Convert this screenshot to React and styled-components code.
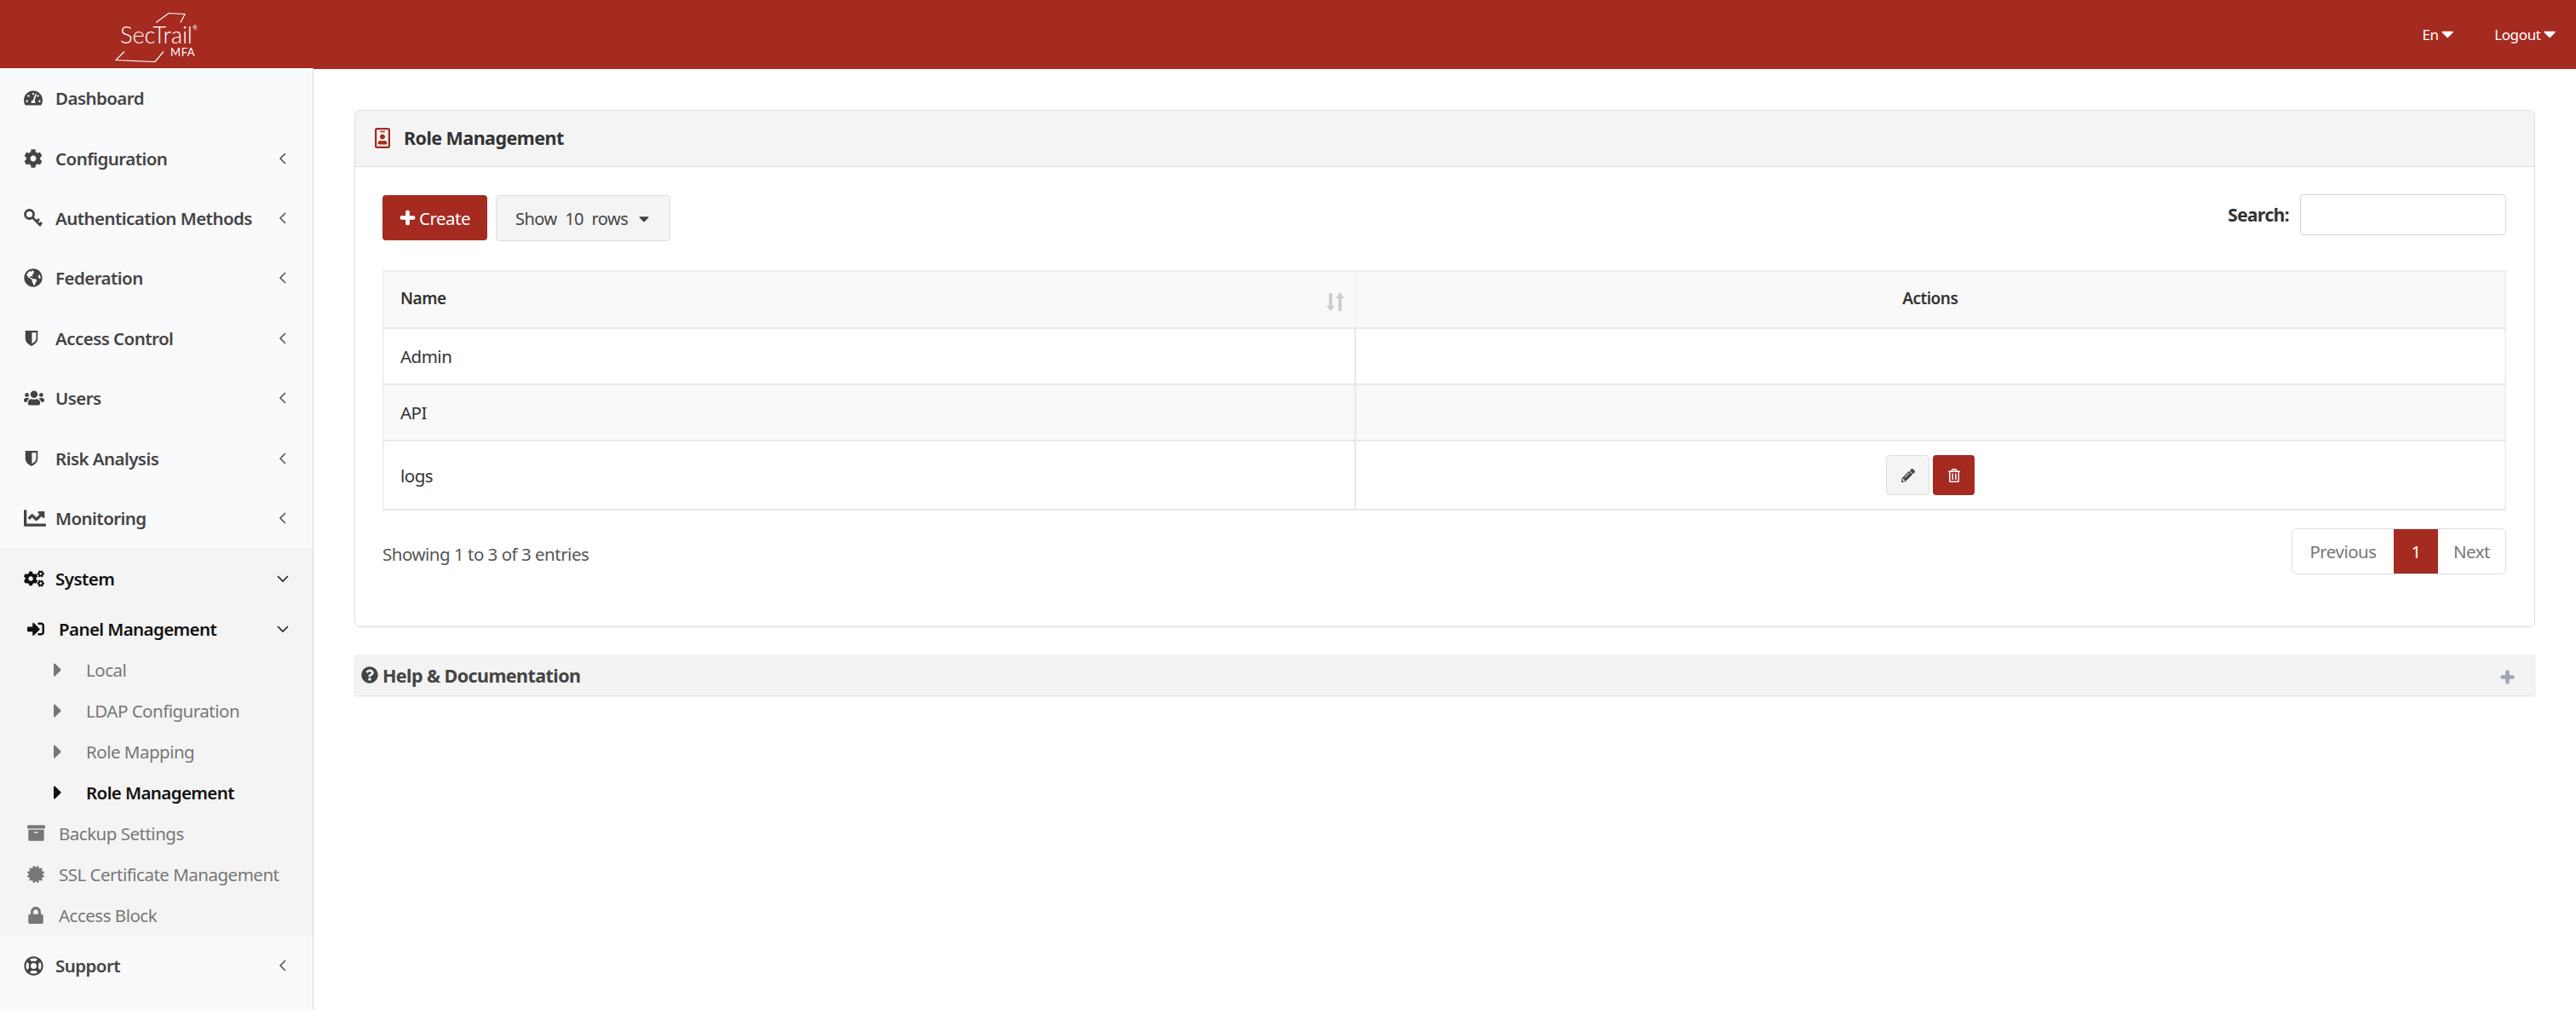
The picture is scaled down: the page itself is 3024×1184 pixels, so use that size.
import React from 'react'
import styled, { createGlobalStyle } from 'styled-components'
import {
  FaTachometerAlt, FaCog, FaGlobeAmericas, FaUsers, FaChartLine, FaCogs, FaSignInAlt,
  FaCaretRight, FaArchive, FaCertificate, FaLock, FaRegLifeRing, FaPlus, FaPencilAlt,
  FaRegTrashAlt, FaQuestionCircle, FaRegIdBadge, FaCaretDown
} from 'react-icons/fa'

const RED = '#a52a20'
const FONT = '"Noto Sans", "Open Sans", sans-serif'

const GlobalStyle = createGlobalStyle`
  html, body { margin: 0; padding: 0; background: #fff; }
  * { box-sizing: border-box; }
  body { font-family: ${FONT}; color: #333; }
`

const Page = styled('div')`
  height: 1184px;
  overflow: hidden;
  display: flex;
  flex-direction: column;
`

const TopBar = styled('header')`
  height: 81px;
  flex: none;
  background: ${RED};
  display: flex;
  align-items: center;
  justify-content: space-between;
  padding: 0 24px 0 135px;
`

const Logo = styled('div')`
  position: relative;
  width: 100px;
  height: 62px;
  margin-top: 3px;
  color: #fff;
`

const LogoFrame = styled('svg')`
  position: absolute;
  left: 0;
  top: 0;
`

const LogoName = styled('span')`
  position: absolute;
  left: 6px;
  top: 13px;
  font: 300 27.5px/34px "Lato", sans-serif;
  letter-spacing: -0.2px;
`

const LogoReg = styled('span')`
  position: absolute;
  left: 91px;
  top: 17px;
  font: 400 7px/8px "Lato", sans-serif;
`

const LogoMfa = styled('span')`
  position: absolute;
  left: 65px;
  top: 42px;
  font: 400 13px/16px "Lato", sans-serif;
  letter-spacing: 0.6px;
`

const TopLinks = styled('nav')`
  display: flex;
  align-items: center;
  gap: 48px;
`

const TopLink = styled('a')`
  display: flex;
  align-items: center;
  gap: 3px;
  color: #fff;
  font-size: 17px;
  letter-spacing: -0.35px;

  svg { width: 14.4px; height: 23px; margin-top: -2px; }
`

const Body = styled('div')`
  flex: 1;
  display: flex;
  min-height: 0;
`

const Sidebar = styled('aside')`
  width: 368px;
  flex: none;
  margin-top: -1px;
  background: #f9fafc;
  border-right: 1px solid #d2d6de;
  position: relative;
`

const MenuRow = styled('div')`
  height: 70.4px;
  display: flex;
  align-items: center;
  padding: 0 28px 0 28px;
  color: #444;
  font-size: 20.5px;
  font-weight: 600;
  letter-spacing: -0.55px;

  ${(props) => props.$open && 'color: #111;'}
`

const MenuIcon = styled('span')`
  width: 37px;
  flex: none;
  display: flex;
  align-items: center;

  svg { width: ${(props) => props.$size || 22}px; height: ${(props) => props.$size || 22}px; }
`

const MenuLabel = styled('span')`
  flex: 1;
  white-space: nowrap;
`

const Chevron = styled('svg')`
  width: 14px;
  height: 14px;
  flex: none;
  fill: none;
  stroke: ${(props) => (props.$open ? '#222' : '#555')};
  stroke-width: 1.6;
`

const OpenGroup = styled('div')`
  background: #f4f4f4;
`

const SystemRow = styled(MenuRow)`
  height: 70.8px;
`

const SubRow = styled('div')`
  height: 48px;
  display: flex;
  align-items: center;
  padding: 0 28px 0 32px;
  color: #777;
  font-size: 20.5px;
  letter-spacing: -0.5px;
  white-space: nowrap;

  ${(props) => props.$active && 'color: #111; font-weight: 600; letter-spacing: -0.6px;'}
`

const SubIcon = styled('span')`
  width: 37px;
  flex: none;
  display: flex;

  svg { width: ${(props) => props.$size || 20}px; height: ${(props) => props.$size || 20}px; }
`

const LeafRow = styled(SubRow)`
  padding-left: 63px;
`

const LeafIcon = styled('span')`
  width: 38px;
  flex: none;
  display: flex;

  svg { width: 9.75px; height: 26px; }
`

const Content = styled('main')`
  flex: 1;
  padding: 48px 48px 0 48px;
  min-width: 0;
`

const Card = styled('section')`
  height: 607px;
  border: 1px solid #ddd;
  border-radius: 6px;
  background: #fff;
  overflow: hidden;
`

const CardHead = styled('div')`
  height: 66px;
  background: #f4f4f4;
  border-bottom: 1px solid #ddd;
  display: flex;
  align-items: center;
  gap: 16px;
  padding: 0 0 2px 23px;
  color: #333;
  font-size: 21.5px;
  font-weight: 700;
  letter-spacing: -0.55px;

  svg { width: 18px; height: 24px; color: ${RED}; }
`

const CardBody = styled('div')`
  padding: 33px 33px 0 32px;
`

const Toolbar = styled('div')`
  display: flex;
  align-items: flex-start;
  height: 88px;
  gap: 10px;
`

const CreateButton = styled('button')`
  width: 123px;
  height: 53px;
  border: 0;
  border-radius: 4px;
  background: ${RED};
  color: #fff;
  font-family: ${FONT};
  font-size: 20.5px;
  letter-spacing: -0.5px;
  display: flex;
  align-items: center;
  justify-content: center;
  gap: 4px;

  svg { width: 19px; height: 19px; stroke: currentColor; stroke-width: 30; }
`

const ShowButton = styled('button')`
  width: 205px;
  height: 54px;
  border: 1px solid #ddd;
  border-radius: 4px;
  background: #f4f4f4;
  color: #444;
  font-family: ${FONT};
  font-size: 20px;
  letter-spacing: -0.5px;
  white-space: pre;
  display: flex;
  align-items: center;
  justify-content: space-between;
  padding: 0 24px 0 22px;

  svg { width: 12px; height: 19px; }
`

const SearchBox = styled('label')`
  margin-left: auto;
  display: flex;
  align-items: center;
  gap: 13px;
  height: 48px;
  margin-top: -1px;
  font-size: 21px;
  font-weight: 700;
  letter-spacing: -0.6px;
`

const SearchInput = styled('input')`
  width: 242px;
  height: 48px;
  border: 1px solid #d2d6de;
  border-radius: 4px;
  background: #fff;
`

const Table = styled('table')`
  width: 100%;
  border-collapse: collapse;
  table-layout: fixed;
  border: 2px solid #f0f0f0;
  font-size: 20.5px;
  letter-spacing: -0.5px;
`

const HeadCell = styled('th')`
  height: 67px;
  background: #f9f9f9;
  border-bottom: 2px solid #e8e8e8;
  border-right: ${(props) => (props.$center ? '0' : '1px solid #f0f0f0')};
  text-align: ${(props) => (props.$center ? 'center' : 'left')};
  padding: 0 19px 3px;
  font-weight: 600;
  font-size: 19px;
  position: relative;
`

const SortIcon = styled('svg')`
  position: absolute;
  right: 13px;
  top: 24px;
  color: #cfcfcf;
`

const Row = styled('tr')`
  background: ${(props) => (props.$striped ? '#f9f9f9' : '#fff')};
`

const Cell = styled('td')`
  height: ${(props) => props.$height}px;
  padding: 0 19px;
  border-bottom: 2px solid #e8e8e8;
  border-right: ${(props) => (props.$first ? '2px solid #e8e8e8' : '0')};
  color: #333;
`

const Actions = styled('div')`
  display: flex;
  justify-content: center;
  gap: 4px;
`

const EditButton = styled('button')`
  width: 51px;
  height: 47px;
  border: 1px solid #ddd;
  border-radius: 4px;
  background: #f4f4f4;
  color: #444;
  display: flex;
  align-items: center;
  justify-content: center;
  padding: 0;

  svg { width: 16px; height: 16px; }
`

const DeleteButton = styled(EditButton)`
  width: 49px;
  border: 0;
  background: ${RED};
  color: #fff;
`

const TableFooter = styled('div')`
  display: flex;
  justify-content: space-between;
  align-items: flex-start;
  margin-top: 21px;
`

const Info = styled('div')`
  margin-top: 16px;
  color: #555;
  font-size: 20.5px;
  letter-spacing: -0.5px;
`

const Pager = styled('div')`
  height: 54px;
  display: flex;
  border: 1px solid #ddd;
  border-radius: 6px;
  overflow: hidden;
  font-size: 20.5px;
  letter-spacing: -0.5px;
  color: #777;
`

const PagerItem = styled('a')`
  width: ${(props) => props.$width}px;
  margin: -1px 0;
  display: flex;
  align-items: center;
  justify-content: center;
  ${(props) => props.$active && `background: ${RED}; color: #fff;`}
`

const HelpBar = styled('div')`
  height: 48px;
  margin-top: 32px;
  background: #f3f3f3;
  border-radius: 3px;
  box-shadow: 0 1px 2px rgba(0, 0, 0, 0.15);
  display: flex;
  align-items: center;
  justify-content: space-between;
  padding: 0 9px 0 8px;
  color: #444;
  font-size: 21.5px;
  font-weight: 700;
  letter-spacing: -0.58px;
`

const HelpTitle = styled('span')`
  display: flex;
  align-items: center;
  gap: 5px;

  svg { width: 20px; height: 20px; }
`

const HelpPlus = styled('span')`
  display: flex;
  color: #9ea5b8;
  margin: 4px 15px 0 0;

  svg { width: 17px; height: 17px; stroke: currentColor; stroke-width: 40; }
`

const KeyIcon = () => (
  <svg viewBox="0 0 22 22" fill="none" stroke="currentColor" strokeWidth="2.8">
    <circle cx="6.5" cy="6.5" r="5" />
    <path d="M10.5 10.5l9.5 9.5M15 15l3-3M18.5 18.5l2.5-2.5" />
  </svg>
)

const ShieldIcon = () => (
  <svg viewBox="0 0 18 22" style={{ width: 18, height: 20 }}>
    <path fill="currentColor" fillRule="evenodd" d="M1 1h16v10c0 5-4 8-8 10-4-2-8-5-8-10zM9.5 3.5v14.5c3-1.7 5.500-3.900 5.500-7v-7.500z" />
  </svg>
)

const ChevronLeft = () => (
  <Chevron viewBox="0 0 14 14"><path d="M10 1L4 7l6 6" /></Chevron>
)

const ChevronDown = () => (
  <Chevron $open viewBox="0 0 14 14"><path d="M1 4l6 6 6-6" /></Chevron>
)

const menuTop = [
  { label: 'Dashboard', icon: <FaTachometerAlt />, plain: true },
  { label: 'Configuration', icon: <FaCog /> },
  { label: 'Authentication Methods', icon: <KeyIcon /> },
  { label: 'Federation', icon: <FaGlobeAmericas /> },
  { label: 'Access Control', icon: <ShieldIcon /> },
  { label: 'Users', icon: <FaUsers />, size: 24 },
  { label: 'Risk Analysis', icon: <ShieldIcon /> },
  { label: 'Monitoring', icon: <FaChartLine />, size: 26 }
]

const leaves = ['Local', 'LDAP Configuration', 'Role Mapping', 'Role Management']

const SideMenu = () => (
  <Sidebar>
    {menuTop.map((item) => (
      <MenuRow key={item.label}>
        <MenuIcon $size={item.size}>{item.icon}</MenuIcon>
        <MenuLabel>{item.label}</MenuLabel>
        {!item.plain && <ChevronLeft />}
      </MenuRow>
    ))}
    <OpenGroup>
      <SystemRow $open>
        <MenuIcon $size={24}><FaCogs /></MenuIcon>
        <MenuLabel>System</MenuLabel>
        <ChevronDown />
      </SystemRow>
      <SubRow $active>
        <SubIcon><FaSignInAlt /></SubIcon>
        <MenuLabel>Panel Management</MenuLabel>
        <ChevronDown />
      </SubRow>
      {leaves.map((leaf) => (
        <LeafRow key={leaf} $active={leaf === 'Role Management'}>
          <LeafIcon><FaCaretRight /></LeafIcon>
          {leaf}
        </LeafRow>
      ))}
      <SubRow>
        <SubIcon $size={21}><FaArchive /></SubIcon>Backup Settings
      </SubRow>
      <SubRow>
        <SubIcon><FaCertificate /></SubIcon>SSL Certificate Management
      </SubRow>
      <SubRow>
        <SubIcon><FaLock /></SubIcon>Access Block
      </SubRow>
    </OpenGroup>
    <MenuRow>
      <MenuIcon $size={23}><FaRegLifeRing /></MenuIcon>
      <MenuLabel>Support</MenuLabel>
      <ChevronLeft />
    </MenuRow>
  </Sidebar>
)

export default function App() {
  return (
    <Page>
      <GlobalStyle />
      <TopBar>
        <Logo>
          <LogoFrame width="100" height="62" viewBox="0 0 100 62" fill="none" stroke="#fff" strokeWidth="1.2">
            <path d="M48 15.5L63 4.5l19 1-5 10" />
            <path d="M11 49.5L1 59.5l46 2 10-12" />
          </LogoFrame>
          <LogoName>SecTrail</LogoName>
          <LogoReg>®</LogoReg>
          <LogoMfa>MFA</LogoMfa>
        </Logo>
        <TopLinks>
          <TopLink>En<FaCaretDown /></TopLink>
          <TopLink>Logout<FaCaretDown /></TopLink>
        </TopLinks>
      </TopBar>
      <Body>
        <SideMenu />
        <Content>
          <Card>
            <CardHead><FaRegIdBadge />Role Management</CardHead>
            <CardBody>
              <Toolbar>
                <CreateButton><FaPlus />Create</CreateButton>
                <ShowButton>Show  10  rows<FaCaretDown /></ShowButton>
                <SearchBox>Search:<SearchInput /></SearchBox>
              </Toolbar>
              <Table>
                <colgroup>
                  <col style={{ width: '1141px' }} />
                  <col />
                </colgroup>
                <thead>
                  <tr>
                    <HeadCell>
                      Name
                      <SortIcon width="21" height="22" viewBox="0 0 21 22" fill="currentColor">
                        <path d="M3 1h4v15h3l-5 6-5-6h3zM14 22h4V7h3l-5-7-5 7h3z" />
                      </SortIcon>
                    </HeadCell>
                    <HeadCell $center>Actions</HeadCell>
                  </tr>
                </thead>
                <tbody>
                  <Row>
                    <Cell $first $height={66}>Admin</Cell>
                    <Cell $height={66} />
                  </Row>
                  <Row $striped>
                    <Cell $first $height={66}>API</Cell>
                    <Cell $height={66} />
                  </Row>
                  <Row>
                    <Cell $first $height={81}>logs</Cell>
                    <Cell $height={81}>
                      <Actions>
                        <EditButton><FaPencilAlt /></EditButton>
                        <DeleteButton><FaRegTrashAlt /></DeleteButton>
                      </Actions>
                    </Cell>
                  </Row>
                </tbody>
              </Table>
              <TableFooter>
                <Info>Showing 1 to 3 of 3 entries</Info>
                <Pager>
                  <PagerItem $width={119}>Previous</PagerItem>
                  <PagerItem $width={52} $active>1</PagerItem>
                  <PagerItem $width={79}>Next</PagerItem>
                </Pager>
              </TableFooter>
            </CardBody>
          </Card>
          <HelpBar>
            <HelpTitle><FaQuestionCircle />Help &amp; Documentation</HelpTitle>
            <HelpPlus><FaPlus /></HelpPlus>
          </HelpBar>
        </Content>
      </Body>
    </Page>
  )
}
